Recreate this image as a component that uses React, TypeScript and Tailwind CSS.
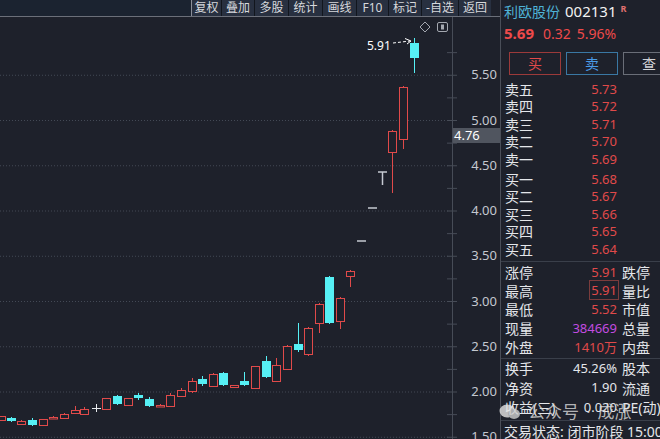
import React from "react";

const RED = "#e04a4a";
const CYAN = "#56f0f5";
const BG = "#1e212b";

// [left x, kind, body top, body bottom, wick top, wick bottom]
type K = [number, "r" | "c" | "d" | "t" | "x", number, number, number, number];

const CANDLES: K[] = [
  [-3, "r", 416, 420, 416, 420],
  [7, "c", 418, 421, 417, 422],
  [17, "r", 421, 424, 420, 425],
  [28, "c", 420, 425, 418, 426],
  [39, "r", 419, 425, 419, 425],
  [49, "r", 417, 418.5, 416, 419],
  [60, "r", 414, 418, 413, 418],
  [71, "r", 410, 413, 406, 414],
  [80, "r", 409, 414, 407, 415],
  [92, "x", 408, 408, 404, 412],
  [102, "r", 398, 409, 398, 409],
  [113, "c", 396, 404, 395, 405],
  [124, "r", 398, 405, 398, 405],
  [134, "c", 395, 398, 393, 400],
  [145, "c", 399, 406, 397, 407],
  [156, "r", 405, 406.5, 404, 407],
  [166, "r", 395, 406, 393, 407],
  [177, "r", 390, 396, 388, 397],
  [188, "r", 381, 391, 378, 393],
  [198, "c", 379, 384, 376, 386],
  [209, "r", 374, 386, 373, 386],
  [219, "c", 373, 385, 372, 386],
  [230, "r", 385, 387, 385, 387],
  [240, "c", 381, 385, 372, 386],
  [251, "r", 366, 388, 366, 388],
  [262, "c", 361, 377, 356, 378],
  [272, "r", 365, 381, 358, 382],
  [283, "r", 346, 369, 345, 369],
  [294, "c", 344, 350, 323, 352],
  [304, "r", 328, 354, 327, 356],
  [315, "r", 304, 323, 303, 333],
  [325, "c", 277, 323, 276, 324],
  [336, "r", 298, 321, 297, 329],
  [346, "r", 271, 276, 270, 287],
  [357, "d", 241, 241, 241, 241],
  [368, "d", 208, 208, 208, 208],
  [378, "t", 172, 172, 172, 185],
  [388, "r", 131, 152, 130, 193],
  [399, "r", 87, 139, 86, 149],
  [410, "c", 43, 58, 38, 73],
];

const LEVELS = ["5.50", "5.00", "4.50", "4.00", "3.50", "3.00", "2.50", "2.00", "1.50"];
const py = (p: number) => 120 + (5 - p) * 90.5;

const TOOLS: [string, string][] = [
  ["复权", "w-[30px]"],
  ["叠加", "w-[33px]"],
  ["多股", "w-[34px]"],
  ["统计", "w-[34px]"],
  ["画线", "w-[34px]"],
  ["F10", "w-[32px]"],
  ["标记", "w-[33px]"],
  ["-自选", "w-[37px]"],
  ["返回", "w-[32px]"],
];

function Candle({ k }: { k: K }) {
  const [x, kind, top, bot, wt, wb] = k;
  const cx = x + 4.5;
  if (kind === "d") {
    return <line x1={x} x2={x + 9} y1={top} y2={top} stroke="#c6cad2" strokeWidth={1.5} />;
  }
  if (kind === "t") {
    return (
      <g stroke="#c6cad2" strokeWidth={1.5}>
        <line x1={x} x2={x + 9} y1={top} y2={top} />
        <line x1={cx} x2={cx} y1={top} y2={wb} />
      </g>
    );
  }
  if (kind === "x") {
    return (
      <g stroke="#e8eaee">
        <line x1={x} x2={x + 9} y1={top + 0.5} y2={top + 0.5} />
        <line x1={cx} x2={cx} y1={wt} y2={wb} />
      </g>
    );
  }
  if (kind === "c") {
    return (
      <g>
        <line x1={cx} x2={cx} y1={wt} y2={wb} stroke={CYAN} />
        <rect x={x} y={top} width={9} height={Math.max(bot - top, 1.5)} fill={CYAN} />
      </g>
    );
  }
  return (
    <g stroke={RED}>
      {wt < top && <line x1={cx} x2={cx} y1={wt} y2={top} />}
      {wb > bot && <line x1={cx} x2={cx} y1={bot} y2={wb} />}
      <rect x={x + 0.5} y={top + 0.5} width={8} height={Math.max(bot - top, 1)} fill={BG} />
    </g>
  );
}

function Chart() {
  const ticks: number[] = [];
  for (let p = 1.5; p <= 5.76; p += 0.25) ticks.push(p);
  return (
    <svg width={500} height={422} viewBox="0 17 500 422" className="block">
      {LEVELS.map((l) => (
        <line key={l} x1={0} x2={449} y1={py(+l) + 0.5} y2={py(+l) + 0.5} stroke="#434955" strokeDasharray="1 2" />
      ))}
      <line x1={452.5} x2={452.5} y1={17} y2={439} stroke="#474c57" />
      {ticks.map((p) => (
        <line key={p} x1={447} x2={457} y1={py(p) + 0.5} y2={py(p) + 0.5} stroke="#474c57" />
      ))}
      {LEVELS.map((l) => (
        <text
          key={l}
          x={497}
          y={py(+l) + 4.5}
          textAnchor="end"
          fontSize={13}
          fill="#c4c8d0"
          fontFamily="'Noto Sans', 'Noto Sans CJK SC', sans-serif"
        >
          {l}
        </text>
      ))}
      <rect x={453} y={128} width={47} height={15} fill="#50555f" />
      <text x={454} y={140} fontSize={13} fill="#ffffff" fontFamily="'Noto Sans', sans-serif">
        4.76
      </text>

      {CANDLES.map((k, i) => (
        <Candle key={i} k={k} />
      ))}

      <text x={367} y={50} fontSize={12} fill="#ffffff" fontFamily="'Noto Sans', sans-serif">
        5.91
      </text>
      <line x1={393} x2={410} y1={43} y2={41} stroke="#ffffff" strokeDasharray="3 2" />
      <polyline points="405,38.5 411,41 407,44" fill="none" stroke="#ffffff" />

      <polygon points="425,22 430,27 425,32 420,27" fill="none" stroke="#a4a8b0" />
      <rect x={437.5} y={22.5} width={10} height={9} rx={1.5} fill="none" stroke="#a4a8b0" />
      <rect x={441} y={24.5} width={3} height={5} fill="#a4a8b0" />
    </svg>
  );
}

function Row({
  label,
  value,
  valueClass = "text-[#e04a4a]",
  extra = "",
  h,
  boxed = false,
}: {
  label: string;
  value: string;
  valueClass?: string;
  extra?: string;
  h: string;
  boxed?: boolean;
}) {
  return (
    <div className={`flex items-center pl-[4px] ${h}`}>
      <span className="whitespace-nowrap text-[14px] text-[#e4e6ea]">{label}</span>
      <span className={`flex-1 text-right text-[13px] ${valueClass}`}>
        <span className={boxed ? "inline-block leading-[16px] outline outline-[#7a3c3c] outline-offset-[1px]" : ""}>
          {value}
        </span>
      </span>
      <span className="w-[43px] shrink-0 whitespace-nowrap pl-[5px] text-[14px] text-[#e4e6ea]">{extra}</span>
    </div>
  );
}

export default function App() {
  return (
    <div className="relative flex h-[439px] w-[660px] overflow-hidden bg-[#1e212b] font-['Noto_Sans','Noto_Sans_CJK_SC',sans-serif]">
      <div className="flex w-[500px] flex-col">
        <div className="flex h-[17px] border-b border-[#6b6f79]">
          <div className="w-[192px] border-r border-[#8a8e98] bg-[#1b2330]" />
          {TOOLS.map(([t, w]) => (
            <div
              key={t}
              className={`flex ${w} items-center justify-center border-r border-[#12161d] bg-[#283040] text-[12px] leading-none text-[#d6d8dc] last:border-r-0`}
            >
              {t}
            </div>
          ))}
        </div>
        <div className="flex-1">
          <Chart />
        </div>
      </div>

      <div className="flex w-[160px] flex-col overflow-hidden border-l border-[#4a4e58]">
        <div className="flex h-[22px] items-center pl-[3px]">
          <span className="text-[14px] text-[#4fb3d6]">利欧股份</span>
          <span className="ml-[5px] text-[15px] text-[#f2f2f2]">002131</span>
          <span className="ml-[4px] self-start pt-[2px] text-[9px] font-bold text-[#e07070]">R</span>
        </div>
        <div className="flex h-[24px] items-center pl-[3px] text-[#ee4a4a]">
          <span className="text-[15px] font-bold">5.69</span>
          <span className="ml-[9px] text-[14px]">0.32</span>
          <span className="ml-[6px] text-[14px]">5.96%</span>
        </div>
        <div className="mt-[7px] flex gap-[5px] pl-[8px]">
          <div className="flex h-[23px] w-[52px] shrink-0 items-center justify-center border border-[#9c3a3a] text-[14px] text-[#e04a4a]">
            买
          </div>
          <div className="flex h-[23px] w-[52px] shrink-0 items-center justify-center border border-[#3a78a4] text-[14px] text-[#4a9be6]">
            卖
          </div>
          <div className="flex h-[23px] w-[52px] shrink-0 items-center justify-center border border-[#6a6e78] text-[14px] text-[#d0d2d6]">
            查
          </div>
        </div>

        <div className="mt-[6px]">
          <Row h="h-[17.5px]" label="卖五" value="5.73" />
          <Row h="h-[17.5px]" label="卖四" value="5.72" />
          <Row h="h-[17.5px]" label="卖三" value="5.71" />
          <Row h="h-[17.5px]" label="卖二" value="5.70" />
          <Row h="h-[17.5px]" label="卖一" value="5.69" />
        </div>
        <div className="flex h-[1px]">
          <div className="w-[53px] bg-[#c8a040]" />
          <div className="flex-1 bg-[#3b5b84]" />
        </div>
        <div className="pt-[2.5px]">
          <Row h="h-[17.5px]" label="买一" value="5.68" />
          <Row h="h-[17.5px]" label="买二" value="5.67" />
          <Row h="h-[17.5px]" label="买三" value="5.66" />
          <Row h="h-[17.5px]" label="买四" value="5.65" />
          <Row h="h-[17.5px]" label="买五" value="5.64" />
        </div>

        <div className="mt-[2.5px] border-t border-[#3a3f4a] pt-[1.5px]">
          <Row h="h-[18.75px]" label="涨停" value="5.91" extra="跌停" />
          <Row h="h-[18.75px]" label="最高" value="5.91" extra="量比" boxed />
          <Row h="h-[18.75px]" label="最低" value="5.52" extra="市值" />
          <Row h="h-[18.75px]" label="现量" value="384669" valueClass="text-[#c24ce0]" extra="总量" />
          <Row h="h-[18.75px]" label="外盘" value="1410万" extra="内盘" />
        </div>

        <div className="mt-[1px] border-t border-[#3a3f4a]">
          <Row h="h-[19.5px]" label="换手" value="45.26%" valueClass="text-[#e4e6ea]" extra="股本" />
          <Row h="h-[19.5px]" label="净资" value="1.90" valueClass="text-[#e4e6ea]" extra="流通" />
          <Row h="h-[19.5px]" label="收益(三)" value="0.020" valueClass="text-[#e4e6ea]" extra="PE(动)" />
        </div>

        <div className="mt-[2.5px] flex flex-1 items-center whitespace-nowrap border-t border-[#3a3f4a] pl-[3px] text-[14px] text-[#e4e6ea]">
          交易状态: 闭市阶段 15:00
        </div>
      </div>

      <div className="absolute left-[499px] top-[399px] flex items-center text-[17px] text-[#dcdcdc]/80">
        <svg width={22} height={18} viewBox="0 0 22 18" className="opacity-80">
          <ellipse cx={8} cy={8} rx={7.5} ry={6.5} fill="#e6e6e6" />
          <ellipse cx={15} cy={11} rx={6} ry={5} fill="#cfcfcf" />
        </svg>
        <span className="ml-[7px]">公众号</span>
        <span className="mx-[7px]">·</span>
        <span>成涨</span>
      </div>
    </div>
  );
}
